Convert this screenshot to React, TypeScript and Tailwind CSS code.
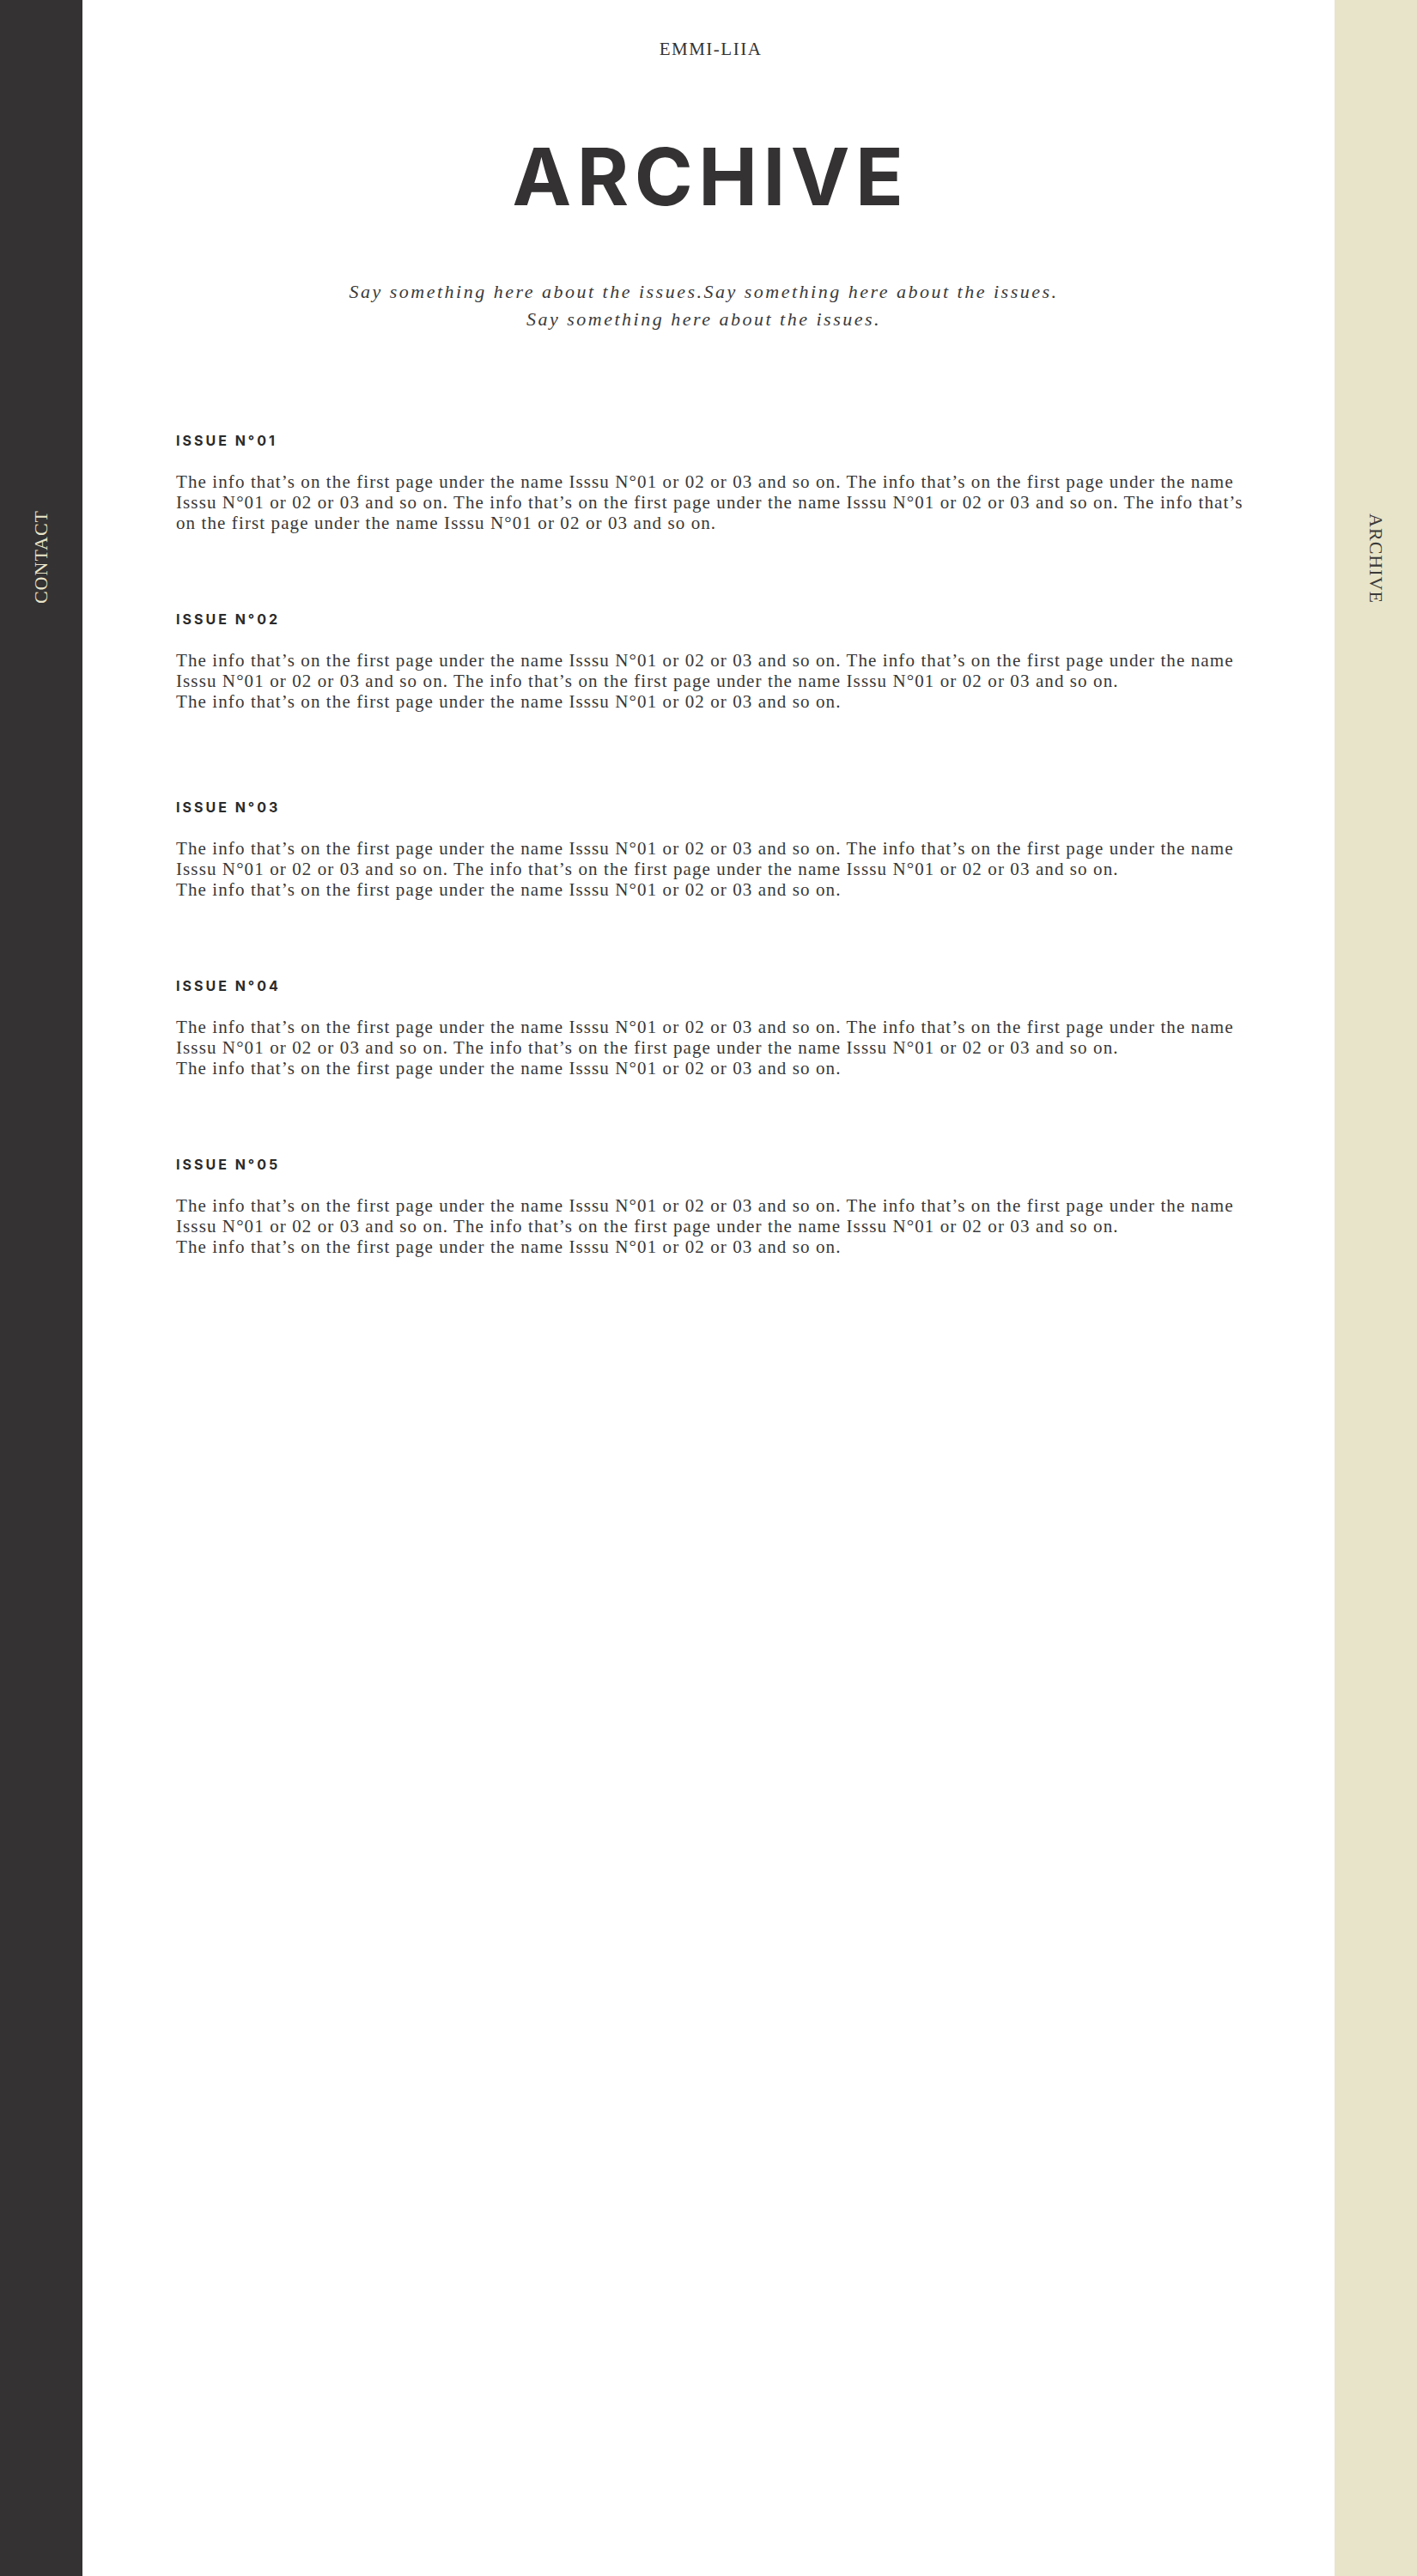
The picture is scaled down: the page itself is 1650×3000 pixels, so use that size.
import React from 'react';

const para = "The info that’s on the first page under the name Isssu N°01 or 02 or 03 and so on.";

const issues = [
  { no: '01', lines: [`${para} ${para} ${para} ${para}`] },
  { no: '02', lines: [`${para} ${para} ${para}`, para] },
  { no: '03', lines: [`${para} ${para} ${para}`, para] },
  { no: '04', lines: [`${para} ${para} ${para}`, para] },
  { no: '05', lines: [`${para} ${para} ${para}`, para] },
];

const serif = "font-['Liberation_Serif','Times_New_Roman',serif]";

export default function App() {
  return (
    <div className="flex min-h-[3000px] w-full bg-white text-[#333]">
      {/* left rail */}
      <aside className="w-[96px] shrink-0 bg-[#343233] flex justify-center">
        <div className="h-[1296px] flex items-center">
          <span className={`${serif} -rotate-90 text-[22px] tracking-[1px] text-[#e8e4c9] whitespace-nowrap`}>
            CONTACT
          </span>
        </div>
      </aside>

      <main className="flex-1 pl-[109px] pr-[104px] pt-[45px]">
        <div className={`${serif} text-center text-[21px] leading-[25px] tracking-[1.5px] text-[#333]`}>EMMI-LIIA</div>

        <h1 className="mt-[90px] text-center font-['Inter',sans-serif] font-bold text-[92px] leading-[92px] tracking-[6.5px] text-[#343233]">
          ARCHIVE
        </h1>

        <p className={`${serif} mt-[72px] pr-[16px] text-center italic text-[22px] leading-[32px] tracking-[2.5px] text-[#3a3a3a]`}>
          Say something here about the issues.Say something here about the issues.
          <br />
          Say something here about the issues.
        </p>

        <div className="mt-[115px] flex flex-col">
          {issues.map((issue, i) => (
            <section key={issue.no} className={i === 1 ? 'mb-[101px]' : 'mb-[90px]'}>
              <h2 className="font-['Inter',sans-serif] font-bold text-[16px] leading-[20px] tracking-[3px] text-[#2b2b2b]">
                ISSUE N°{issue.no}
              </h2>
              <div className={`${serif} mt-[26px] text-[21px] leading-[24px] tracking-[1.1px] text-[#383838]`}>
                {issue.lines.map((l, j) => (
                  <p key={j}>{l}</p>
                ))}
              </div>
            </section>
          ))}
        </div>
      </main>

      {/* right rail */}
      <aside className="w-[96px] shrink-0 bg-[#e8e4c9] flex justify-center">
        <div className="h-[1300px] flex items-center">
          <span className={`${serif} rotate-90 text-[22px] tracking-[1px] text-[#3a3a3a] whitespace-nowrap`}>
            ARCHIVE
          </span>
        </div>
      </aside>
    </div>
  );
}
